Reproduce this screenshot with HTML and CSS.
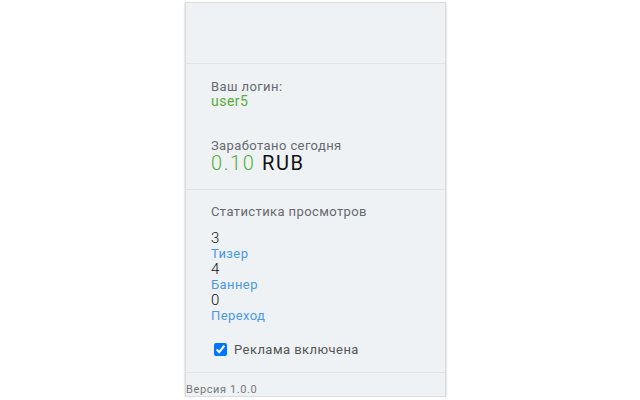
FILE: index.html
```html
<!DOCTYPE html>
<html lang="ru">
<head>
<meta charset="utf-8">
<title>Popup</title>
<link rel="stylesheet" href="styles.css">
</head>
<body>
<div class="panel">
  <div class="header"></div>
  <div class="section top">
    <div class="label">Ваш логин:</div>
    <div class="login">user5</div>
    <div class="label earned">Заработано сегодня</div>
    <div class="amount"><span class="green">0.10</span> RUB</div>
  </div>
  <div class="section stats">
    <div class="label">Статистика просмотров</div>
    <div class="list">
      <div class="num">3</div>
      <div class="link">Тизер</div>
      <div class="num">4</div>
      <div class="link">Баннер</div>
      <div class="num">0</div>
      <div class="link">Переход</div>
    </div>
    <label class="check"><input type="checkbox" checked> <span>Реклама включена</span></label>
  </div>
  <div class="version">Версия 1.0.0</div>
</div>
</body>
</html>
```
FILE: styles.css
```css
html, body {
  margin: 0;
  padding: 0;
  background: #ffffff;
  font-family: Roboto, "Liberation Sans", sans-serif;
}
.panel {
  box-sizing: border-box;
  margin: 2px 0 0 185px;
  width: 261px;
  height: 395px;
  background: #eef2f5;
  border: 1px solid #d9dde0;
  box-shadow: 0 1px 2px rgba(0,0,0,0.25);
  display: flex;
  flex-direction: column;
}
.header {
  height: 60px;
  border-bottom: 1px solid #dfe4e8;
}
.section {
  padding: 16px 25px 16px 25px;
}
.top {
  border-bottom: 1px solid #dfe4e8;
}
.label {
  font-size: 13px;
  line-height: 14px;
  letter-spacing: 0.4px;
  color: #666a6e;
}
.login {
  font-size: 14px;
  line-height: 14px;
  letter-spacing: 0.5px;
  color: #58ad35;
}
.earned {
  margin-top: 31px;
}
.amount {
  font-size: 20px;
  line-height: 20px;
  letter-spacing: 1.6px;
  color: #111;
}
.green {
  color: #58ad35;
  font-weight: 300;
}
.stats {
  padding-top: 15px;
  padding-bottom: 16px;
  border-bottom: 1px solid #dfe4e8;
}
.list {
  margin-top: 11px;
}
.num {
  font-size: 15px;
  line-height: 16px;
  font-weight: 300;
  letter-spacing: 0.5px;
  color: #111;
}
.link {
  font-size: 13px;
  line-height: 15px;
  letter-spacing: 0.4px;
  color: #4a98e6;
}
.check {
  display: flex;
  align-items: center;
  margin-top: 19px;
  height: 14px;
  font-size: 13px;
  letter-spacing: 0.45px;
  color: #555;
}
.check input {
  margin: 0 7px 0 3px;
  width: 13px;
  height: 13px;
}
.version {
  font-size: 11px;
  line-height: 13px;
  letter-spacing: 0.6px;
  color: #777;
  padding-top: 10px;
}
```
